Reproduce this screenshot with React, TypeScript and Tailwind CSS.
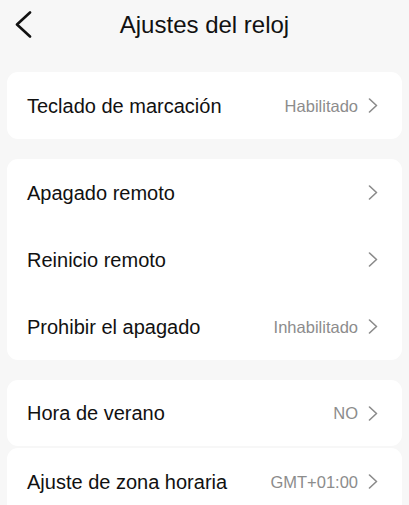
import React from "react";

const Chevron = () => (
  <svg width="10" height="15" viewBox="0 0 10 15" fill="none" className="shrink-0">
    <polyline points="1.5,1 8.5,7.5 1.5,14" stroke="#8a8a8a" strokeWidth="1.6" strokeLinecap="round" strokeLinejoin="round" />
  </svg>
);

type RowProps = { label: string; value?: string };

const Row = ({ label, value }: RowProps) => (
  <div className="flex h-[67px] items-center justify-between pl-[20px] pr-[24px]">
    <span className="text-[20px] leading-[28px] text-[#111111]">{label}</span>
    <div className="flex items-center gap-[10px]">
      {value && <span className="text-[16.5px] leading-[22px] text-[#8c8c8c]">{value}</span>}
      <Chevron />
    </div>
  </div>
);

export default function App() {
  return (
    <div className="min-h-[505px] w-full bg-[#f7f7f7]" style={{ fontFamily: '"Liberation Sans", Arial, sans-serif' }}>
      <div className="grid h-[72px] grid-cols-[1fr_auto_1fr] items-start pt-[11px]">
        <div className="pl-[13px]">
          <svg width="20" height="28" viewBox="0 0 20 28" fill="none">
            <polyline points="17,1.5 4,13.5 17,25.5" stroke="#111111" strokeWidth="2.6" strokeLinecap="round" strokeLinejoin="round" />
          </svg>
        </div>
        <h1 className="text-[24px] leading-[28px] font-normal text-[#111111]">Ajustes del reloj</h1>
        <div />
      </div>
      <div className="flex flex-col px-[7px] pb-[20px]">
        <div className="rounded-[11px] bg-white">
          <Row label="Teclado de marcación" value="Habilitado" />
        </div>
        <div className="mt-[20px] rounded-[11px] bg-white">
          <Row label="Apagado remoto" />
          <Row label="Reinicio remoto" />
          <Row label="Prohibir el apagado" value="Inhabilitado" />
        </div>
        <div className="mt-[20px] rounded-[11px] bg-white h-[66px] flex flex-col justify-center">
          <Row label="Hora de verano" value="NO" />
        </div>
        <div className="mt-[2px] rounded-[11px] bg-white">
          <Row label="Ajuste de zona horaria" value="GMT+01:00" />
        </div>
      </div>
    </div>
  );
}
